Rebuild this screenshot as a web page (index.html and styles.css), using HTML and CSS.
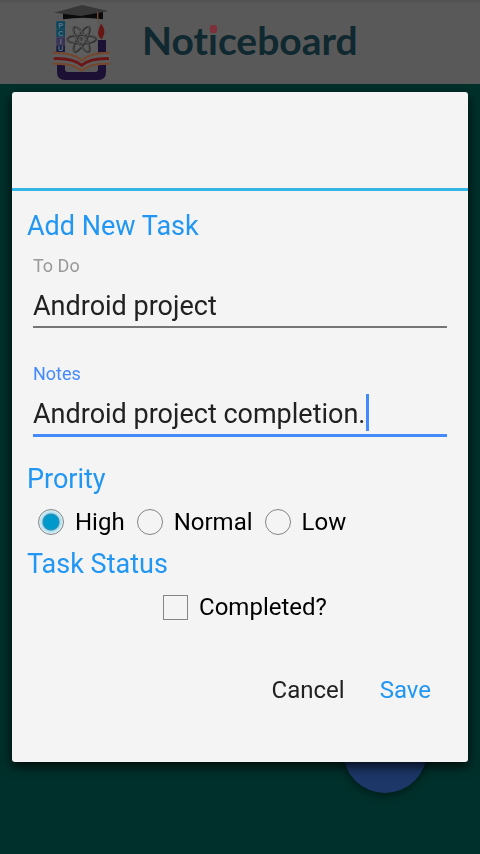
FILE: index.html
```html
<!DOCTYPE html>
<html lang="en">
<head>
<meta charset="utf-8">
<meta name="viewport" content="width=device-width, initial-scale=1">
<title>Noticeboard</title>
<link rel="stylesheet" href="styles.css">
</head>
<body>
<header class="app-bar">
  <svg class="crest" viewBox="30 0 180 252" role="img" aria-label="PCIU">
    <path fill="#5e5e5e" d="M75 58h97v140H75z"/>
    <path fill="#1d1035" d="M51 188v28q0 24 24 24h99q24 0 24-24V120h-24v88q0 8-8 8H83q-8 0-8-8v-20z"/>
    <path fill="#0b0b0b" d="M69 36h120v22q-60-9-120 0z"/>
    <path fill="#373737" d="M42 38 126 15l79 18-82 15z"/>
    <path fill="none" stroke="#774b32" stroke-width="4" d="M173 36v26"/>
    <path fill="#084660" d="M49 64h26v22H49zM49 88h26v22H49z"/>
    <path fill="#393158" d="M49 112h26v22H49z"/>
    <path fill="#171c43" d="M49 136h26v20H49z"/>
    <g class="crest-letters"><text x="62" y="83">P</text><text x="62" y="107">C</text><text x="62" y="131">I</text><text x="62" y="154">U</text></g>
    <g fill="none" stroke="#303030" stroke-width="6">
      <ellipse cx="125" cy="118" rx="43" ry="13"/>
      <ellipse cx="125" cy="118" rx="43" ry="13" transform="rotate(60 125 118)"/>
      <ellipse cx="125" cy="118" rx="43" ry="13" transform="rotate(120 125 118)"/>
    </g>
    <g fill="none" stroke="#555" stroke-width="3">
      <ellipse cx="123" cy="116" rx="43" ry="13"/>
      <ellipse cx="123" cy="116" rx="43" ry="13" transform="rotate(60 123 116)"/>
      <ellipse cx="123" cy="116" rx="43" ry="13" transform="rotate(120 123 116)"/>
    </g>
    <circle cx="124" cy="117" r="6" fill="#444"/>
    <path fill="#671713" d="M183 71q13 14 9 32l-6 15q-11-6-12-20 2-14 9-27z"/>
    <path fill="#5e5e5e" d="M39 156q58-2 86 26 28-28 86-26v38q-58-3-86 20-28-23-86-20z"/>
    <path fill="none" stroke="#74482f" stroke-width="7" d="M39 159q58-2 86 22 28-24 86-22M39 191q58-2 86 20 28-22 86-20"/>
    <path fill="none" stroke="#6c1717" stroke-width="9" d="M41 176q56-2 84 20 28-22 82-20"/>
  </svg>
  <h1 class="brand">Not<span class="brand-i">i</span>ceboard</h1>
</header>
<button class="fab" type="button" aria-label="Add task"></button>
<main class="dialog" role="dialog" aria-label="Add New Task">
  <div class="dialog-title"></div>
  <form class="form">
    <h2 class="heading">Add New Task</h2>
    <div class="field">
      <label for="todo">To Do</label>
      <div class="line"><input id="todo" type="text" value="Android project"></div>
    </div>
    <div class="field active">
      <label for="notes">Notes</label>
      <div class="line"><input id="notes" type="text" value="Android project completion."><span class="caret"></span></div>
    </div>
    <h2 class="heading">Prority</h2>
    <div class="choices">
      <label><input type="radio" name="priority" checked>High</label>
      <label><input type="radio" name="priority">Normal</label>
      <label><input type="radio" name="priority">Low</label>
    </div>
    <h2 class="heading">Task Status</h2>
    <div class="choices status">
      <label><input type="checkbox">Completed?</label>
    </div>
    <div class="actions">
      <button type="button">Cancel</button>
      <button type="submit" class="save">Save</button>
    </div>
  </form>
</main>
</body>
</html>
```
FILE: styles.css
```css
* { box-sizing: border-box; }
body {
  margin: 0;
  min-height: 100vh;
  background: #00302b;
  font-family: Roboto, "Noto Sans", sans-serif;
}
.app-bar {
  display: flex;
  align-items: center;
  gap: 32px;
  height: 84px;
  padding-left: 50px;
  background: linear-gradient(#505050, #595959 4px);
}
.crest { width: 60px; height: 84px; }
.crest-letters {
  fill: #66747c;
  font: bold 22px "Liberation Sans", sans-serif;
  text-anchor: middle;
}
.brand {
  margin: 0;
  padding-bottom: 4px;
  color: #10282f;
  font: bold 39px/48px Lato, sans-serif;
  font-variant-ligatures: none;
}
.brand-i { position: relative; }
.brand-i::after {
  content: "";
  position: absolute;
  left: 2px;
  top: 8px;
  width: 7px;
  height: 8px;
  border-radius: 2px;
  background: #80303a;
}
.fab {
  position: fixed;
  right: 53px;
  bottom: 61px;
  width: 84px;
  height: 84px;
  padding: 0;
  border: 0;
  border-radius: 50%;
  background: #1c3768;
  box-shadow: 0 3px 8px rgba(0, 0, 0, .4);
}
.dialog {
  position: relative;
  margin: 8px 12px 92px;
  border-radius: 3px;
  background: #f4f4f4;
  box-shadow: 0 4px 12px rgba(0, 0, 0, .8);
}
.dialog-title {
  height: 99px;
  border-bottom: 3px solid #33b5e5;
}
.form { padding: 17px 15px 48px; }
.heading {
  margin: 0;
  color: #2196f3;
  font-size: 27px;
  font-weight: 400;
  line-height: 37px;
}
.field {
  height: 108px;
  padding: 9px 6px 0;
  color: #999;
  font-size: 18px;
}
.field label { display: block; line-height: 24px; }
.line {
  display: flex;
  align-items: flex-end;
  height: 50px;
  border-bottom: 2px solid #757575;
}
.line input {
  flex: 1;
  min-width: 0;
  height: 40px;
  padding: 0;
  border: 0;
  outline: 0;
  background: none;
  color: #212121;
  font: 27px/40px Roboto, sans-serif;
}
.active { color: #448aff; }
.active .line { height: 51px; border-bottom: 3px solid #448aff; }
.active input { flex: none; field-sizing: content; }
.caret { width: 3px; height: 37px; margin-bottom: 3px; background: #448aff; }
.choices {
  display: flex;
  gap: 12px;
  height: 48px;
  padding-left: 11px;
}
.choices label {
  display: flex;
  align-items: center;
  gap: 11px;
  color: #000;
  font-size: 24px;
}
.choices input {
  appearance: none;
  width: 26px;
  height: 26px;
  margin: 0;
  border: 1px solid #858585;
}
.choices input[type="radio"] { border-radius: 50%; }
.choices input[type="radio"]:checked {
  background: radial-gradient(circle, #0099cc 0 7px, #3a8cab 8px, #a5dcf0 9px, #e3f2f7 12px);
}
.status { justify-content: center; padding-left: 10px; }
.choices input[type="checkbox"] { width: 25px; height: 25px; }
.actions {
  display: flex;
  justify-content: flex-end;
  gap: 35px;
  padding: 35px 22px 0 0;
}
.actions button {
  height: 48px;
  padding: 0;
  border: 0;
  background: none;
  color: #212121;
  font: 24px/48px Roboto, sans-serif;
}
.actions .save { color: #2196f3; }
```
